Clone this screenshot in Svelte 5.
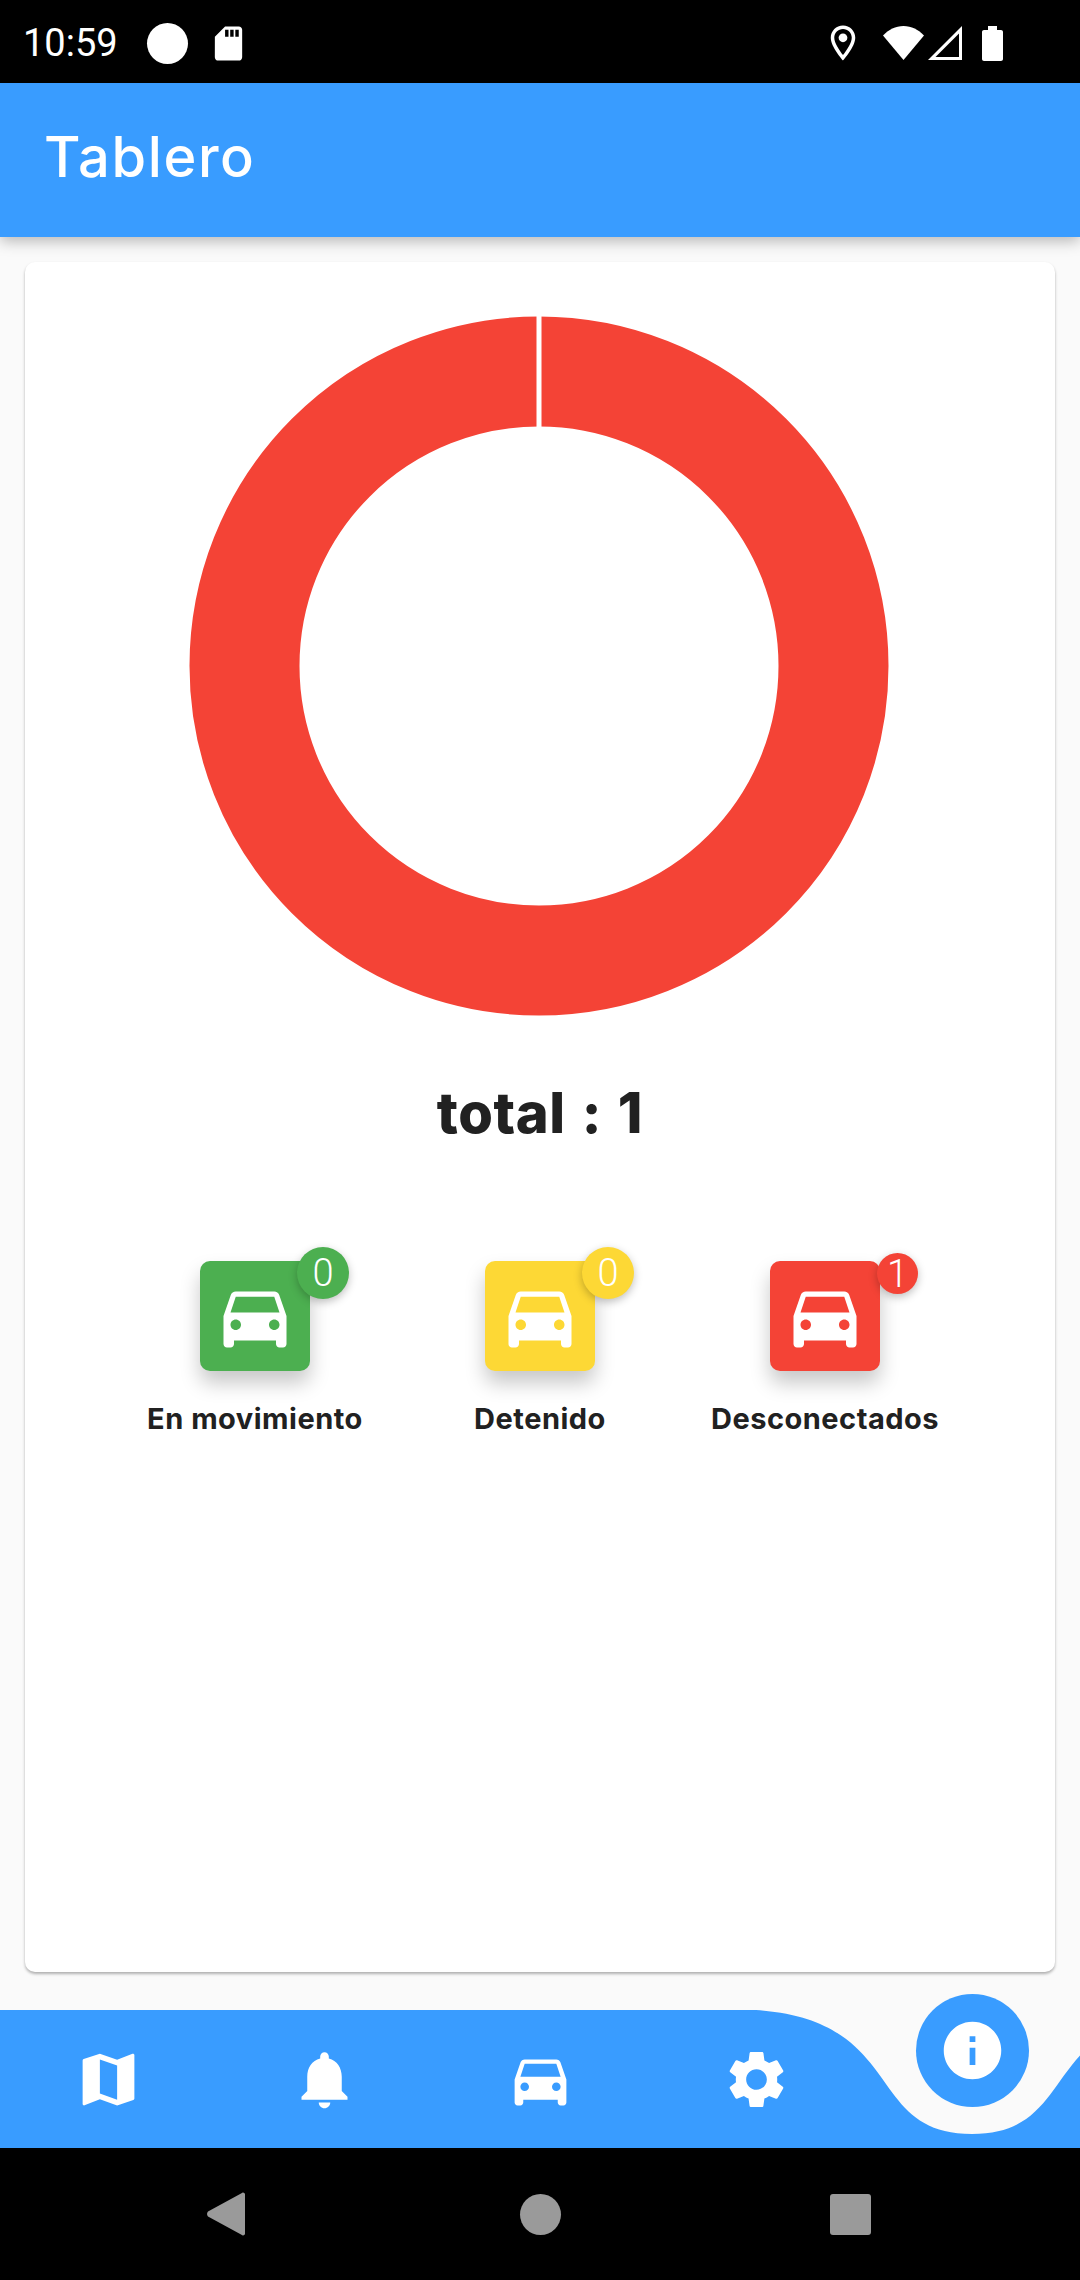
<script>
  const car =
    'M18.92 6.01C18.72 5.42 18.16 5 17.5 5h-11c-.66 0-1.21.42-1.42 1.01L3 12v8c0 .55.45 1 1 1h1c.55 0 1-.45 1-1v-1h12v1c0 .55.45 1 1 1h1c.55 0 1-.45 1-1v-8l-2.08-5.99zM6.5 16c-.83 0-1.5-.67-1.5-1.5S5.67 13 6.5 13s1.5.67 1.5 1.5S7.33 16 6.5 16zm11 0c-.83 0-1.5-.67-1.5-1.5s.67-1.5 1.5-1.5 1.5.67 1.5 1.5-.67 1.5-1.5 1.5zM5 11l1.5-4.5h11L19 11H5z';

  const navIcons = [
    'M20.5 3l-.16.03L15 5.1 9 3 3.36 4.9c-.21.07-.36.25-.36.48V20.5c0 .28.22.5.5.5l.16-.03L9 18.9l6 2.1 5.64-1.9c.21-.07.36-.25.36-.48V3.5c0-.28-.22-.5-.5-.5zM15 19l-6-2.11V5l6 2.11V19z',
    'M12 22c1.1 0 2-.9 2-2h-4c0 1.1.89 2 2 2zm6-6v-5c0-3.07-1.64-5.64-4.5-6.32V4c0-.83-.67-1.5-1.5-1.5s-1.5.67-1.5 1.5v.68C7.63 5.36 6 7.92 6 11v5l-2 2v1h16v-1l-2-2z',
    car,
    'M19.14 12.94c.04-.3.06-.61.06-.94 0-.32-.02-.64-.07-.94l2.03-1.58c.18-.14.23-.41.12-.61l-1.92-3.32c-.12-.22-.37-.29-.59-.22l-2.39.96c-.5-.38-1.03-.7-1.62-.94l-.36-2.54c-.04-.24-.24-.41-.48-.41h-3.84c-.24 0-.43.17-.47.41l-.36 2.54c-.59.24-1.13.57-1.62.94l-2.39-.96c-.22-.08-.47 0-.59.22L2.74 8.87c-.12.21-.08.47.12.61l2.03 1.58c-.05.3-.09.63-.09.94s.02.64.07.94l-2.03 1.58c-.18.14-.23.41-.12.61l1.92 3.32c.12.22.37.29.59.22l2.39-.96c.5.38 1.03.7 1.62.94l.36 2.54c.05.24.24.41.48.41h3.84c.24 0 .44-.17.47-.41l.36-2.54c.59-.24 1.13-.56 1.62-.94l2.39.96c.22.08.47 0 .59-.22l1.92-3.32c.12-.22.07-.47-.12-.61l-2.01-1.58zM12 15.6c-1.98 0-3.6-1.62-3.6-3.6s1.62-3.6 3.6-3.6 3.6 1.62 3.6 3.6-1.62 3.6-3.6 3.6z'
  ];

  const stats = [
    { label: 'En movimiento', count: 0, tone: 'green' },
    { label: 'Detenido', count: 0, tone: 'yellow' },
    { label: 'Desconectados', count: 1, tone: 'red' }
  ];
</script>

<div class="screen">
  <div class="status">
    <span class="clock">10:59</span>
    <span class="dot"></span>
    <svg class="sd" viewBox="0 0 24 24"><path d="M18 2h-8L4.02 8 4 20c0 1.1.9 2 2 2h12c1.1 0 2-.9 2-2V4c0-1.1-.9-2-2-2zm-6 6h-2V4h2v4zm3 0h-2V4h2v4zm3 0h-2V4h2v4z" /></svg>
    <span class="spacer"></span>
    <svg class="pin" viewBox="0 0 24 24"><path d="M12 2C8.13 2 5 5.13 5 9c0 5.25 7 13 7 13s7-7.75 7-13c0-3.87-3.13-7-7-7zM7 9c0-2.76 2.24-5 5-5s5 2.24 5 5c0 2.88-2.88 7.19-5 9.88C9.92 16.21 7 11.85 7 9z" /><circle cx="12" cy="9" r="2.5" /></svg>
    <svg class="wifi" viewBox="0 0 41 34"><path d="M0 9.5C5.5 3.7 12.6 0 20.5 0S35.500 3.700 41 9.500L20.500 34z" /></svg>
    <svg class="signal" viewBox="0 0 34 34"><path fill-rule="evenodd" d="M34 0V34H0zM31 7.500 7.500 31H31z" /></svg>
    <svg class="battery" viewBox="0 0 21 35"><path d="M6 0h9v4h4c1.100 0 2 .9 2 2v27c0 1.100-.9 2-2 2H2c-1.100 0-2-.9-2-2V6c0-1.100.9-2 2-2h4z" /></svg>
  </div>

  <header class="appbar">Tablero</header>

  <main class="body">
    <section class="card">
      <svg class="donut" viewBox="0 0 700 700">
        <circle cx="350" cy="350" r="294.500" fill="none" stroke="#f44336" stroke-width="110" />
        <rect x="347.500" y="0" width="5" height="112" fill="#fff" />
      </svg>

      <h1 class="total">total : 1</h1>

      <div class="stats">
        {#each stats as s}
          <div class="stat">
            <div class="tile {s.tone}">
              <svg class="tile__car" viewBox="0 0 24 24"><path d={car} /></svg>
              <span class="badge {s.tone}" class:narrow={s.count > 0}>{s.count}</span>
            </div>
            <span class="stat__label">{s.label}</span>
          </div>
        {/each}
      </div>
    </section>
  </main>

  <nav class="nav">
    <svg class="nav__bg" viewBox="0 0 1080 138" preserveAspectRatio="none">
      <path d="M0 0H756C907 10 864 124 972 124C1080 124 1037 10 1188 0V138H0Z" fill="#399cff" />
    </svg>
    <div class="nav__items">
      {#each navIcons as d}
        <span class="nav__item"><svg viewBox="0 0 24 24"><path {d} /></svg></span>
      {/each}
      <span class="nav__item"></span>
    </div>
    <button class="fab" aria-label="info">
      <svg viewBox="0 0 24 24"><path d="M12 2C6.480 2 2 6.480 2 12s4.480 10 10 10 10-4.480 10-10S17.520 2 12 2zm1 15h-2v-6h2v6zm0-8h-2V7h2v2z" /></svg>
    </button>
  </nav>

  <div class="sysnav">
    <svg class="back" viewBox="0 0 38 44"><path d="M36 0.500c1 0 2 .8 2 2v39c0 1.200-1 2-2 2-.6 0-1.100-.3-1.500-.7L1 24.500c-1.300-1.400-1.300-3.600 0-5L34.500 1.200c.4-.4.9-.7 1.500-.7z" /></svg>
    <span class="home"></span>
    <span class="recent"></span>
  </div>
</div>

<style>
  :global(body) {
    margin: 0;
    background: #fafafa;
  }

  .screen {
    width: 1080px;
    height: 2280px;
    display: flex;
    flex-direction: column;
    overflow: hidden;
    background: #fafafa;
    font-family: Inter, 'Noto Sans', sans-serif;
    color: #212121;
  }

  .status {
    height: 83px;
    flex: none;
    display: flex;
    align-items: center;
    padding: 3px 0 0 23px;
    box-sizing: border-box;
    background: #000;
  }

  .status svg {
    fill: #fff;
    flex: none;
  }

  .clock {
    width: 94px;
    font: 400 38px/1 Roboto, sans-serif;
    color: #fff;
  }

  .dot {
    width: 41px;
    height: 41px;
    margin-left: 30px;
    border-radius: 50%;
    background: #fff;
  }

  .sd {
    width: 41px;
    height: 41px;
    margin-left: 20px;
  }

  .spacer {
    flex: 1;
  }

  .pin {
    width: 42px;
    height: 42px;
    margin-right: 19px;
  }

  .wifi {
    width: 41px;
    height: 34px;
    margin-right: 4px;
  }

  .signal {
    width: 34px;
    height: 34px;
    margin-right: 20px;
  }

  .battery {
    width: 21px;
    height: 35px;
    margin-right: 77px;
  }

  .appbar {
    height: 154px;
    flex: none;
    display: flex;
    align-items: center;
    padding: 0 0 7px 44px;
    box-sizing: border-box;
    background: #399cff;
    color: #fff;
    font-size: 56px;
    font-weight: 500;
    letter-spacing: 1.6px;
    box-shadow: 0 4px 14px rgba(0, 0, 0, 0.28);
    position: relative;
  }

  .body {
    flex: 1;
    padding: 25px 25px 0;
    min-height: 0;
  }

  .card {
    height: 1710px;
    background: #fff;
    border-radius: 10px;
    box-shadow: 0 2px 3px rgba(0, 0, 0, 0.3);
    display: flex;
    flex-direction: column;
    align-items: center;
    box-sizing: border-box;
    padding-top: 54px;
  }

  .donut {
    width: 700px;
    height: 700px;
    flex: none;
    margin-right: 2px;
  }

  .total {
    margin: 62px 0 0;
    height: 70px;
    font-size: 56px;
    line-height: 70px;
    font-weight: 800;
    letter-spacing: 0.6px;
    word-spacing: 3px;
  }

  .stats {
    display: grid;
    grid-template-columns: repeat(3, 285px);
    margin-top: 113px;
  }

  .stat {
    display: flex;
    flex-direction: column;
    align-items: center;
  }

  .tile {
    position: relative;
    width: 110px;
    height: 110px;
    border-radius: 10px;
    display: flex;
    align-items: center;
    justify-content: center;
    box-shadow: 0 12px 20px rgba(0, 0, 0, 0.22);
  }

  .tile__car {
    width: 84px;
    height: 84px;
    fill: #fff;
  }

  .green {
    background: #4caf50;
  }

  .yellow {
    background: #fdd835;
  }

  .red {
    background: #f44336;
  }

  .badge {
    position: absolute;
    left: 97px;
    top: -14px;
    width: 52px;
    height: 52px;
    border-radius: 50%;
    display: flex;
    align-items: center;
    justify-content: center;
    color: #fff;
    font: 300 38px/1 Roboto, sans-serif;
    box-shadow: 0 3px 8px rgba(0, 0, 0, 0.25);
  }

  .badge.narrow {
    left: 107px;
    top: -8px;
    width: 41px;
    height: 41px;
  }

  .stat__label {
    margin-top: 28px;
    height: 40px;
    font-size: 29px;
    line-height: 40px;
    font-weight: 700;
    letter-spacing: 0.5px;
    white-space: nowrap;
  }

  .nav {
    position: relative;
    height: 138px;
    flex: none;
  }

  .nav__bg {
    position: absolute;
    inset: 0;
    width: 100%;
    height: 100%;
  }

  .nav__items {
    position: relative;
    display: grid;
    grid-template-columns: repeat(5, 216px);
    height: 100%;
  }

  .nav__item {
    display: flex;
    justify-content: center;
    padding-top: 35px;
  }

  .nav__item svg {
    width: 69px;
    height: 69px;
    fill: #fff;
  }

  .fab {
    position: absolute;
    left: 916px;
    top: -16px;
    width: 113px;
    height: 113px;
    padding: 0;
    border: 0;
    border-radius: 50%;
    background: #399cff;
    display: flex;
    align-items: center;
    justify-content: center;
  }

  .fab svg {
    width: 69px;
    height: 69px;
    fill: #fff;
  }

  .sysnav {
    height: 132px;
    flex: none;
    background: #000;
    display: grid;
    grid-template-columns: repeat(3, 312px);
    justify-content: center;
    align-items: center;
    justify-items: center;
  }

  .back {
    width: 38px;
    height: 44px;
    fill: #9a9a9a;
    margin-right: 4px;
  }

  .home {
    width: 41px;
    height: 41px;
    border-radius: 50%;
    background: #9a9a9a;
  }

  .recent {
    width: 41px;
    height: 41px;
    border-radius: 3px;
    background: #9a9a9a;
    margin-right: 3px;
  }
</style>
